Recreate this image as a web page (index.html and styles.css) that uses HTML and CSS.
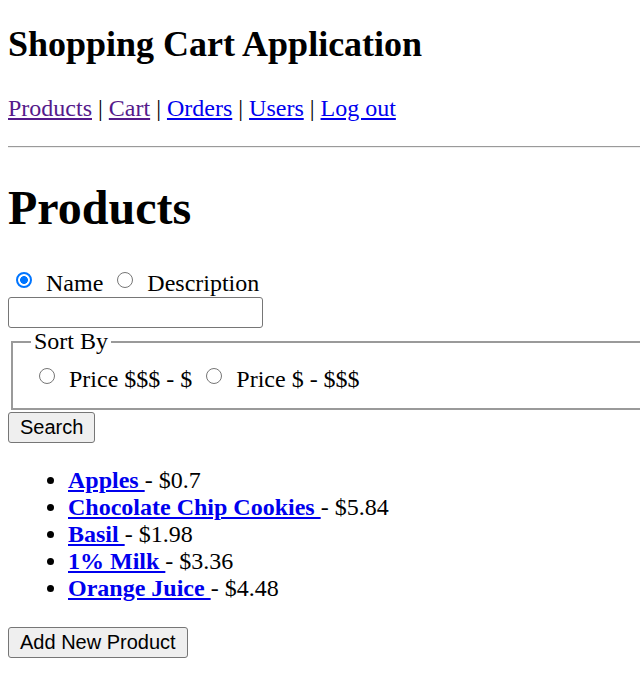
FILE: index.html
```html
<!DOCTYPE html>
<html lang="en">
<head>
<meta charset="utf-8">
<title>Shopping Cart Application</title>
<link rel="stylesheet" href="styles.css">
</head>
<body>
<h2 class="app-title">Shopping Cart Application</h2>
<p class="nav"><a class="link visited" href="#">Products</a> | <a class="link visited" href="#">Cart</a> | <a class="link" href="#">Orders</a> | <a class="link" href="#">Users</a> | <a class="link" href="#">Log out</a></p>
<hr class="rule">
<h1 class="page-title">Products</h1>
<form class="search">
  <div class="field-row"><label class="choice"><input class="radio" type="radio" name="field" checked> Name</label> <label class="choice"><input class="radio" type="radio" name="field"> Description</label></div>
  <input class="query" type="text">
  <fieldset class="sort">
    <legend class="sort-legend">Sort By</legend>
    <div class="field-row"><label class="choice"><input class="radio" type="radio" name="sort"> Price $$$ - $</label> <label class="choice"><input class="radio" type="radio" name="sort"> Price $ - $$$</label></div>
  </fieldset>
  <button class="btn" type="button">Search</button>
</form>
<ul class="products">
  <li><a class="link product" href="#">Apples </a> - $0.7</li>
  <li><a class="link product" href="#">Chocolate Chip Cookies </a> - $5.84</li>
  <li><a class="link product" href="#">Basil </a> - $1.98</li>
  <li><a class="link product" href="#">1% Milk </a> - $3.36</li>
  <li><a class="link product" href="#">Orange Juice </a> - $4.48</li>
</ul>
<button class="btn" type="button">Add New Product</button>
</body>
</html>
```

FILE: styles.css
```css
html {
  overflow: hidden;
}
body {
  margin: 0 0 0 8px;
  font-family: "Liberation Serif", "Times New Roman", serif;
  font-size: 24px;
  color: #000;
  background: #fff;
}
.app-title {
  font-size: 36px;
  font-weight: bold;
  margin: 23px 0 30px;
}
.nav {
  margin: 30px 0 24px;
}
.link {
  color: #0000ee;
  text-decoration: underline;
}
.link.visited {
  color: #551a8b;
}
.rule {
  margin: 24px -20px 32px 0;
  border: 0;
  border-top: 1px solid #9a9a9a;
  border-bottom: 1px solid #eeeeee;
  height: 0;
}
.page-title {
  font-size: 48px;
  font-weight: bold;
  margin: 32px 0 32px;
}
.search {
  margin: 0;
}
.field-row {
  height: 30px;
  line-height: 32px;
}
.choice {
  cursor: default;
}
.radio {
  -webkit-appearance: none;
  appearance: none;
  box-sizing: border-box;
  width: 16px;
  height: 16px;
  margin: 0 8px 0 8px;
  border: 1px solid #767676;
  border-radius: 50%;
  background: #fff;
  vertical-align: 3px;
}
.radio:checked {
  border: 2px solid #0075ff;
  background: radial-gradient(circle, #0075ff 0 3.6px, #fff 4.2px);
}
.query {
  display: block;
  box-sizing: border-box;
  width: 255px;
  height: 31px;
  margin: 0;
  padding: 2px 3px;
  border: 1px solid #767676;
  border-radius: 3px;
  font-family: "Liberation Sans", Arial, sans-serif;
  font-size: 20px;
}
.sort {
  margin: 0 -20px 0 3px;
  padding: 8px 18px 15px;
  border: 2px solid #9a9a9a;
}
.sort-legend {
  padding: 0 3px;
}
.btn {
  display: block;
  box-sizing: border-box;
  height: 31px;
  margin: 2px 0 0;
  padding: 2px 11px;
  border: 1px solid #767676;
  border-radius: 3px;
  background: #efefef;
  color: #000;
  font-family: "Liberation Sans", Arial, sans-serif;
  font-size: 20px;
  line-height: 23px;
}
.products {
  margin: 24px 0 25px;
  padding-left: 60px;
}
.product {
  font-weight: bold;
}
```
